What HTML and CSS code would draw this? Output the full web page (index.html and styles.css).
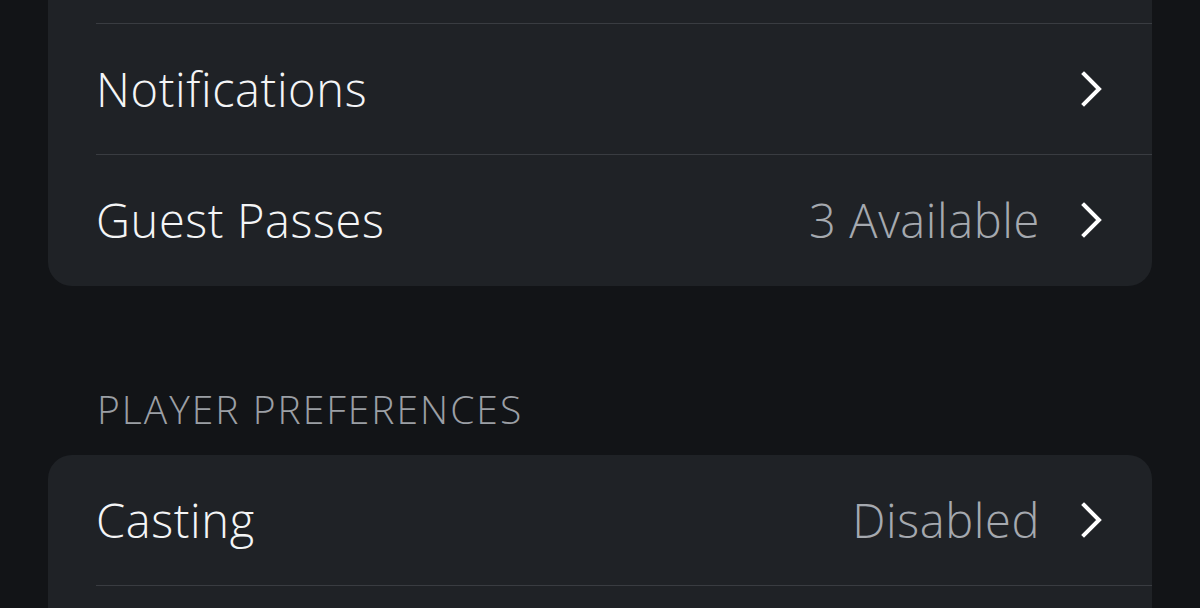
FILE: index.html
```html
<!DOCTYPE html>
<html lang="en">
<head>
    <meta charset="UTF-8">
    <title>Settings</title>
    <link rel="stylesheet" href="styles.css">
</head>
<body>
    <div class="pagina">
        <div class="tarjeta tarjetaArriba">
            <div class="fila filaCortada"></div>
            <div class="fila">
                <span class="etiqueta">Notifications</span>
                <span class="derecha">
                    <svg class="flecha" viewBox="0 0 24 36"><path d="M4 3 L19 18 L4 33"/></svg>
                </span>
            </div>
            <div class="fila">
                <span class="etiqueta">Guest Passes</span>
                <span class="derecha">
                    <span class="valor">3 Available</span>
                    <svg class="flecha" viewBox="0 0 24 36"><path d="M4 3 L19 18 L4 33"/></svg>
                </span>
            </div>
        </div>

        <h3 class="seccion">PLAYER PREFERENCES</h3>

        <div class="tarjeta">
            <div class="fila">
                <span class="etiqueta">Casting</span>
                <span class="derecha">
                    <span class="valor">Disabled</span>
                    <svg class="flecha" viewBox="0 0 24 36"><path d="M4 3 L19 18 L4 33"/></svg>
                </span>
            </div>
            <div class="fila"></div>
        </div>
    </div>
</body>
</html>
```

FILE: styles.css
```css
body{
    margin: 0;
    padding: 0;
    background-color: #121417;
    font-family: "Open Sans", "Noto Sans", sans-serif;
    overflow: hidden;
    height: 608px;
}
.pagina{
    padding: 0 48px;
}
.tarjeta{
    background-color: #1f2226;
    border-radius: 24px;
    padding-left: 48px;
}
.tarjetaArriba{
    margin-top: -107px;
    padding-bottom: 1px;
}
.fila{
    display: flex;
    align-items: center;
    justify-content: space-between;
    height: 130px;
    border-bottom: 1px solid #393c41;
    padding-right: 48px;
}
.fila:last-child{
    border-bottom: none;
}
.etiqueta{
    color: #f4f5f6;
    font-size: 47px;
    font-weight: 300;
    letter-spacing: 0.6px;
}
.derecha{
    display: flex;
    align-items: center;
}
.valor{
    color: #a5a9af;
    font-size: 47px;
    font-weight: 300;
    letter-spacing: 0.6px;
    margin-right: 40px;
}
.flecha{
    width: 24px;
    height: 36px;
    fill: none;
    stroke: #ffffff;
    stroke-width: 4;
    stroke-linecap: square;
}
.seccion{
    margin: 0;
    padding: 96px 0 20px 49px;
    color: #9b9fa5;
    font-size: 39px;
    font-weight: 300;
    letter-spacing: 2px;
}
```
